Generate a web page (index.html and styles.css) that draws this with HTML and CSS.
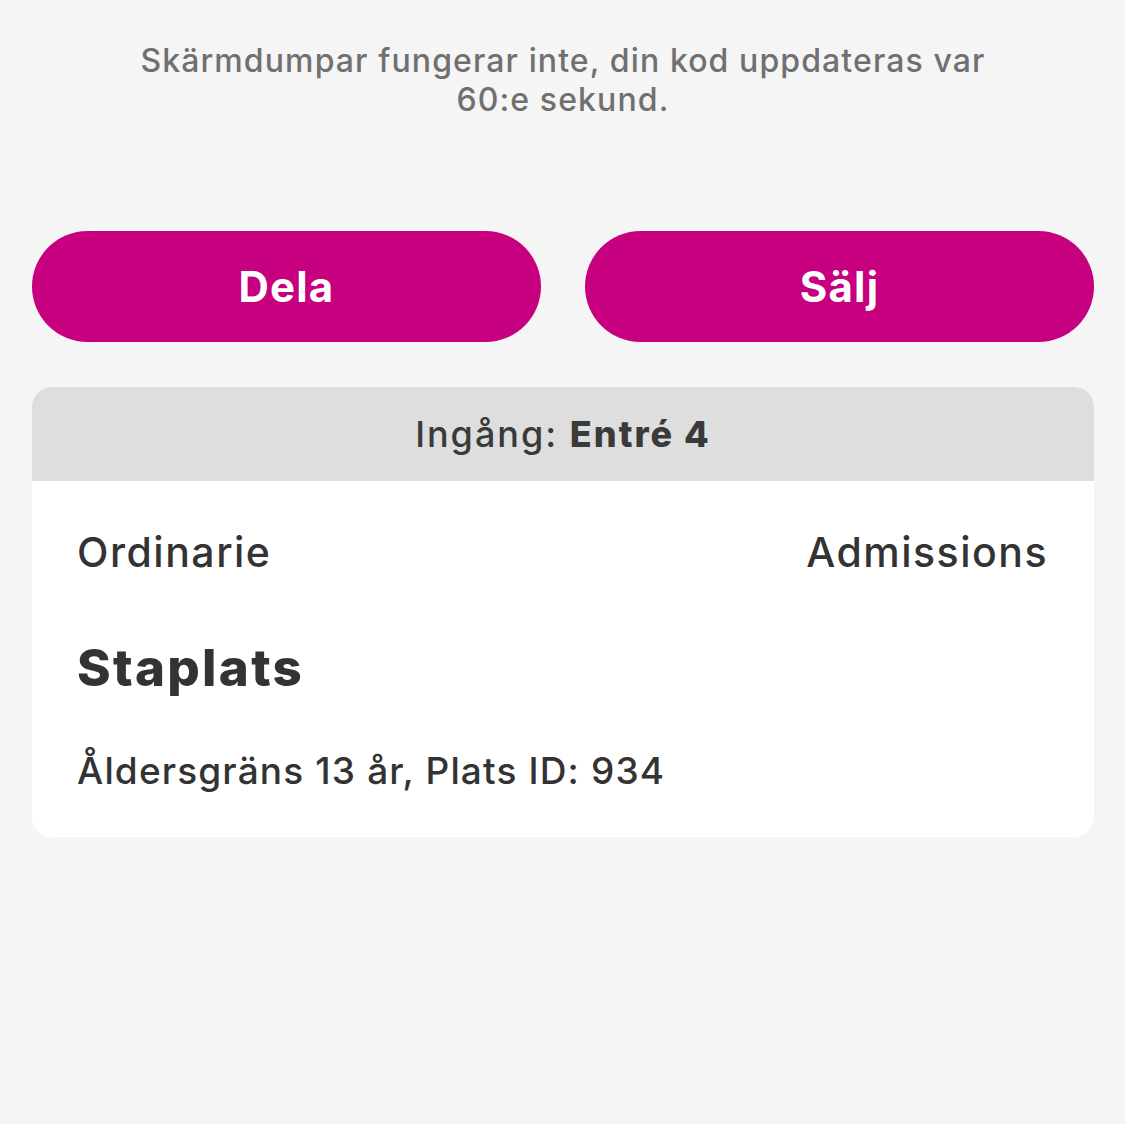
FILE: index.html
```html
<!DOCTYPE html>
<html>
	<head>
		<meta charset="UTF-8">
		<title>Biljett</title>
		<link rel="stylesheet" href="styles.css">
	</head>
	<body>
		<div id="wrap">
			<p class="notice">Skärmdumpar fungerar inte, din kod uppdateras var 60:e sekund.</p>
			<div class="actions">
				<button class="btn">Dela</button>
				<button class="btn">Sälj</button>
			</div>
			<div class="ticket">
				<div class="ticket-head">Ingång: <b>Entré 4</b></div>
				<div class="ticket-body">
					<div class="row">
						<span>Ordinarie</span>
						<span>Admissions</span>
					</div>
					<h2 class="section">Staplats</h2>
					<p class="info">Åldersgräns 13 år, Plats ID: 934</p>
				</div>
			</div>
		</div>
	</body>
</html>
```

FILE: styles.css
```css
html,body,p,h2{
	margin: 0;
	padding: 0;
}
body{
	background: #f5f5f5;
	font-family: Inter, "Noto Sans", sans-serif;
	color: #333;
}
#wrap{
	padding: 41px 31px 0 32px;
}
.notice{
	width: 860px;
	margin: 0 auto;
	text-align: center;
	font-size: 32px;
	font-weight: 500;
	letter-spacing: 1.1px;
	line-height: 39px;
	color: #707070;
}
.actions{
	display: flex;
	gap: 44px;
	margin-top: 112px;
}
.btn{
	flex: 1;
	height: 111px;
	border: none;
	border-radius: 56px;
	background: #c6007e;
	color: #fff;
	font-family: inherit;
	font-size: 42px;
	font-weight: 700;
	letter-spacing: 1.2px;
}
.ticket{
	margin-top: 45px;
	background: #fff;
	border-radius: 20px;
	overflow: hidden;
}
.ticket-head{
	height: 94px;
	line-height: 94px;
	background: #dedede;
	text-align: center;
	font-size: 36px;
	font-weight: 500;
	letter-spacing: 2px;
	color: #3a3a3a;
}
.ticket-head b{
	font-weight: 800;
}
.ticket-body{
	padding: 46px 46px 43px 45px;
}
.row{
	display: flex;
	justify-content: space-between;
	font-size: 41px;
	font-weight: 500;
	letter-spacing: 1.5px;
	line-height: 50px;
}
.section{
	margin-top: 61px;
	font-size: 51px;
	font-weight: 800;
	letter-spacing: 2.3px;
	line-height: 60px;
}
.info{
	margin-top: 50px;
	font-size: 37px;
	font-weight: 500;
	letter-spacing: 1.15px;
	line-height: 46px;
}
```
